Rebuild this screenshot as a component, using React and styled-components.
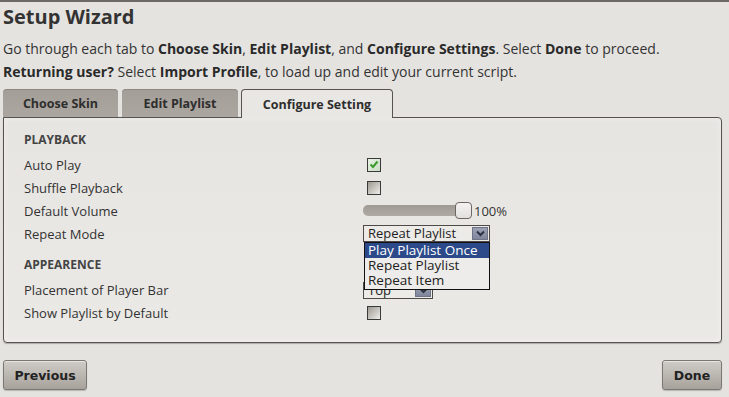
import React from "react";
import styled, { createGlobalStyle } from "styled-components";

const GlobalStyle = createGlobalStyle`
  html, body {
    margin: 0;
    padding: 0;
    background: #e5e3e0;
  }
  body {
    font-family: "Open Sans", "Noto Sans", sans-serif;
    color: #333;
  }
`;

const Page = styled.div`
  width: 729px;
  height: 397px;
  box-sizing: border-box;
  border-top: 2px solid #6d6966;
  padding: 0 7px 0 3px;
  overflow: hidden;
`;

const Title = styled.h1`
  margin: 0;
  height: 30px;
  line-height: 30px;
  font-size: 20px;
  font-weight: 700;
  color: #333;
`;

const Intro = styled.p`
  margin: 5px 0 0;
  font-size: 14px;
  line-height: 23px;
  color: #333;
  b {
    font-weight: 700;
    color: #2a2a2a;
  }
`;

const Tabs = styled.div`
  display: flex;
  align-items: flex-end;
  margin-top: 6px;
  height: 28px;
  position: relative;
  z-index: 2;
`;

const Tab = styled.div`
  box-sizing: border-box;
  width: ${({ $w }) => $w}px;
  margin-right: ${({ $gap }) => $gap || 0}px;
  height: ${({ $active }) => ($active ? 29 : 28)}px;
  margin-bottom: ${({ $active }) => ($active ? -1 : 0)}px;
  display: flex;
  align-items: center;
  justify-content: center;
  font-size: 12.5px;
  font-weight: 700;
  color: #2e2e2e;
  border-radius: 4px 4px 0 0;
  background: ${({ $active }) =>
    $active ? "#e9e7e4" : "linear-gradient(#a49e98, #aca6a0)"};
  border: ${({ $active }) => ($active ? "1px solid #57544f" : "none")};
  border-bottom: none;
  box-shadow: ${({ $active }) =>
    $active ? "none" : "inset 0 1px 0 #8f8984"};
  padding-top: 1px;
`;

const Panel = styled.div`
  box-sizing: border-box;
  height: 226px;
  border: 1px solid #57544f;
  border-radius: 0 4px 4px 4px;
  background: linear-gradient(#e7e5e2, #ebe9e6);
  box-shadow: 0 1px 1px rgba(0, 0, 0, 0.25), inset 0 0 6px rgba(255, 255, 255, 0.4);
  padding: 11px 0 0 20px;
  position: relative;
  z-index: 1;
`;

const Section = styled.div`
  height: 22px;
  line-height: 22px;
  font-size: 12px;
  font-weight: 700;
  color: #444;
  margin-top: ${({ $first }) => ($first ? 0 : 9)}px;
  margin-bottom: 2px;
`;

const Row = styled.div`
  display: grid;
  grid-template-columns: 339px 1fr;
  height: 23px;
  align-items: center;
`;

const Label = styled.div`
  font-size: 13px;
  color: #333;
`;

const Control = styled.div`
  display: flex;
  align-items: center;
  position: relative;
  height: 23px;
`;

const Box = styled.div`
  box-sizing: border-box;
  width: 14px;
  height: 14px;
  margin-left: 4px;
  border: 1px solid #3a3a3a;
  background: ${({ $checked }) =>
    $checked
      ? "linear-gradient(135deg, #e9f2e4, #c9dcc4)"
      : "linear-gradient(135deg, #9c9890, #f1efec)"};
  display: flex;
  align-items: center;
  justify-content: center;
`;

const Track = styled.div`
  position: relative;
  width: 100px;
  height: 11px;
  border-radius: 5px;
  background: linear-gradient(#a09a94, #b0aaa4);
`;

const Thumb = styled.div`
  position: absolute;
  top: -3px;
  left: 92px;
  box-sizing: border-box;
  width: 17px;
  height: 17px;
  border: 1px solid #6b6763;
  border-radius: 4px;
  background: linear-gradient(#f4f3f1, #e2e0dd);
`;

const Value = styled.span`
  margin-left: 11px;
  font-size: 13px;
  color: #333;
`;

const Select = styled.div`
  box-sizing: border-box;
  width: ${({ $w }) => $w}px;
  height: 17px;
  border: 1px solid #4d4a47;
  background: #ecebe8;
  display: flex;
  align-items: center;
  justify-content: space-between;
  padding: 0 1px 0 4px;
  font-size: 13px;
  line-height: 15px;
  color: #222;
  margin-top: ${({ $dy }) => $dy || 0}px;
`;

const Arrow = styled.div`
  width: 16px;
  height: 13px;
  border: 1px solid #6e7486;
  box-sizing: border-box;
  background: linear-gradient(#9da3b6, #7f869c);
  display: flex;
  align-items: center;
  justify-content: center;
`;

const List = styled.div`
  position: absolute;
  top: 20px;
  left: 1px;
  width: 126px;
  box-sizing: border-box;
  border: 1px solid #111;
  background: #edecea;
  z-index: 5;
  padding: 0 0 1px;
`;

const Item = styled.div`
  height: 15px;
  line-height: 15px;
  font-size: 13.5px;
  padding-left: 3px;
  color: ${({ $sel }) => ($sel ? "#fff" : "#222")};
  background: ${({ $sel }) => ($sel ? "#2c4a8a" : "transparent")};
`;

const Footer = styled.div`
  display: flex;
  justify-content: space-between;
  margin-top: 17px;
`;

const Button = styled.button`
  box-sizing: border-box;
  width: ${({ $w }) => $w}px;
  height: 30px;
  border: 1px solid #7a7672;
  border-radius: 3px;
  background: linear-gradient(#cfcbc6, #a7a29c);
  box-shadow: inset 0 1px 0 rgba(255, 255, 255, 0.5), 0 1px 1px rgba(0, 0, 0, 0.2);
  font-family: "DejaVu Sans", Verdana, sans-serif;
  font-size: 12.5px;
  font-weight: 700;
  color: #222;
  padding: 0;
`;

const Chevron = () => (
  <svg width="9" height="7" viewBox="0 0 9 7">
    <path d="M1 1.5 L4.5 5 L8 1.5" fill="none" stroke="#2d3140" strokeWidth="2" />
  </svg>
);

const Check = () => (
  <svg width="10" height="9" viewBox="0 0 10 9">
    <path d="M1.5 4.5 L4 7 L8.5 1.5" fill="none" stroke="#3b9a2c" strokeWidth="2" />
  </svg>
);

const App = () => {
  const repeatOptions = ["Play Playlist Once", "Repeat Playlist", "Repeat Item"];
  return (
    <>
      <GlobalStyle />
      <Page>
        <Title>Setup Wizard</Title>
        <Intro>
          Go through each tab to <b>Choose Skin</b>, <b>Edit Playlist</b>, and{" "}
          <b>Configure Settings</b>. Select <b>Done</b> to proceed.
          <br />
          <b>Returning user?</b> Select <b>Import Profile</b>, to load up and edit
          your current script.
        </Intro>
        <Tabs>
          <Tab $w={115} $gap={4}>Choose Skin</Tab>
          <Tab $w={116} $gap={3}>Edit Playlist</Tab>
          <Tab $w={152} $active>Configure Setting</Tab>
        </Tabs>
        <Panel>
          <Section $first>PLAYBACK</Section>
          <Row>
            <Label>Auto Play</Label>
            <Control>
              <Box $checked>
                <Check />
              </Box>
            </Control>
          </Row>
          <Row>
            <Label>Shuffle Playback</Label>
            <Control>
              <Box />
            </Control>
          </Row>
          <Row>
            <Label>Default Volume</Label>
            <Control>
              <Track>
                <Thumb />
              </Track>
              <Value>100%</Value>
            </Control>
          </Row>
          <Row>
            <Label>Repeat Mode</Label>
            <Control>
              <Select $w={127}>
                Repeat Playlist
                <Arrow>
                  <Chevron />
                </Arrow>
              </Select>
              <List>
                {repeatOptions.map((opt, i) => (
                  <Item key={opt} $sel={i === 0}>
                    {opt}
                  </Item>
                ))}
              </List>
            </Control>
          </Row>
          <Section>APPEARENCE</Section>
          <Row>
            <Label>Placement of Player Bar</Label>
            <Control>
              <Select $w={70} $dy={2}>
                Top
                <Arrow>
                  <Chevron />
                </Arrow>
              </Select>
            </Control>
          </Row>
          <Row>
            <Label>Show Playlist by Default</Label>
            <Control>
              <Box />
            </Control>
          </Row>
        </Panel>
        <Footer>
          <Button $w={84}>Previous</Button>
          <Button $w={60}>Done</Button>
        </Footer>
      </Page>
    </>
  );
};

export default App;
